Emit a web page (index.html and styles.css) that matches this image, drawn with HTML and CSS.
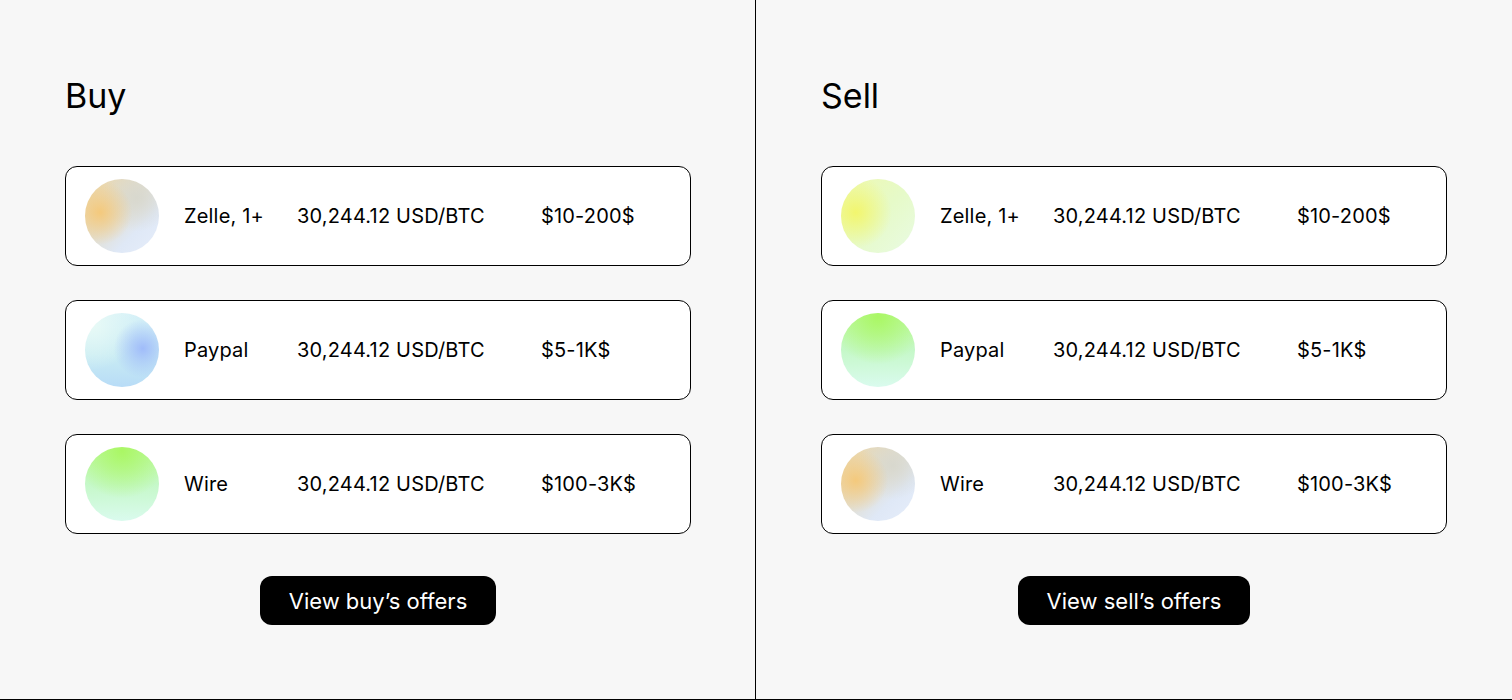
FILE: index.html
```html
<!DOCTYPE html>
<html>
<head>
<meta charset="utf-8">
<link rel="stylesheet" href="styles.css">
</head>
<body>
<div class="page">
  <section class="panel panel-buy">
    <h1 class="title">Buy</h1>
    <div class="offers">
      <div class="offer">
        <div class="avatar g-peach"></div>
        <div class="method">Zelle, 1+</div>
        <div class="price">30,244.12 USD/BTC</div>
        <div class="range">$10-200$</div>
      </div>
      <div class="offer">
        <div class="avatar g-sky"></div>
        <div class="method">Paypal</div>
        <div class="price">30,244.12 USD/BTC</div>
        <div class="range">$5-1K$</div>
      </div>
      <div class="offer">
        <div class="avatar g-lime"></div>
        <div class="method">Wire</div>
        <div class="price">30,244.12 USD/BTC</div>
        <div class="range">$100-3K$</div>
      </div>
    </div>
    <div class="actions"><button class="btn">View buy’s offers</button></div>
  </section>
  <section class="panel panel-sell">
    <h1 class="title">Sell</h1>
    <div class="offers">
      <div class="offer">
        <div class="avatar g-yellow"></div>
        <div class="method">Zelle, 1+</div>
        <div class="price">30,244.12 USD/BTC</div>
        <div class="range">$10-200$</div>
      </div>
      <div class="offer">
        <div class="avatar g-lime"></div>
        <div class="method">Paypal</div>
        <div class="price">30,244.12 USD/BTC</div>
        <div class="range">$5-1K$</div>
      </div>
      <div class="offer">
        <div class="avatar g-peach"></div>
        <div class="method">Wire</div>
        <div class="price">30,244.12 USD/BTC</div>
        <div class="range">$100-3K$</div>
      </div>
    </div>
    <div class="actions"><button class="btn">View sell’s offers</button></div>
  </section>
</div>
</body>
</html>
```

FILE: styles.css
```css
* { box-sizing: border-box; }
html, body { margin: 0; padding: 0; }
body {
  background: #f7f7f7;
  font-family: Inter, "Noto Sans", sans-serif;
  color: #000;
}
.page {
  display: flex;
  width: 1512px;
  height: 700px;
  border-bottom: 1px solid #000;
}
.panel {
  width: 756px;
  padding: 74px 0 0 65px;
}
.panel-buy { border-right: 1px solid #000; }
.title {
  margin: 0;
  font-size: 34px;
  font-weight: 400;
  line-height: 44px;
  letter-spacing: 0;
}
.offers {
  margin-top: 48px;
  display: flex;
  flex-direction: column;
  gap: 34px;
  width: 626px;
}
.offer {
  height: 100px;
  background: #fff;
  border: 1px solid #000;
  border-radius: 12px;
  display: flex;
  align-items: center;
  padding-left: 19px;
  font-size: 20px;
  line-height: 24px;
  letter-spacing: 0.18px;
}
.avatar {
  width: 74px;
  height: 74px;
  border-radius: 50%;
  flex: none;
  margin-right: 25px;
}
.method { width: 113px; flex: none; }
.price { width: 244px; flex: none; }
.range { flex: none; }
.actions {
  width: 626px;
  display: flex;
  justify-content: center;
  margin-top: 42px;
}
.btn {
  background: #000;
  color: #fff;
  border: 0;
  border-radius: 12px;
  height: 49px;
  padding: 0 29px;
  font-family: Inter, "Noto Sans", sans-serif;
  font-size: 22px;
  font-weight: 400;
}
.g-peach {
  background:
    radial-gradient(circle at 20% 45%, rgba(245,200,120,0.95) 0%, rgba(245,200,120,0) 45%),
    radial-gradient(circle at 70% 25%, rgba(215,215,205,0.9) 0%, rgba(215,215,205,0) 45%),
    linear-gradient(135deg, #ecd6a6 0%, #e2dfd2 45%, #dfe8f6 70%, #e6eefb 100%);
}
.g-sky {
  background:
    radial-gradient(circle at 78% 48%, rgba(160,188,250,1) 0%, rgba(160,188,250,0) 42%),
    radial-gradient(circle at 10% 15%, rgba(232,250,246,1) 0%, rgba(232,250,246,0) 50%),
    linear-gradient(180deg, #d6f1f8 0%, #c9ecf3 55%, #b8dcf7 100%);
}
.g-lime {
  background:
    radial-gradient(circle at 50% 5%, rgba(170,247,100,1) 0%, rgba(170,247,100,0) 60%),
    linear-gradient(180deg, #bdf9a3 0%, #c5f8c8 50%, #dafbee 100%);
}
.g-yellow {
  background:
    radial-gradient(circle at 20% 45%, rgba(242,246,110,1) 0%, rgba(242,246,110,0) 50%),
    linear-gradient(135deg, #eef9b0 0%, #e6fac8 50%, #e9fbe3 100%);
}
```
